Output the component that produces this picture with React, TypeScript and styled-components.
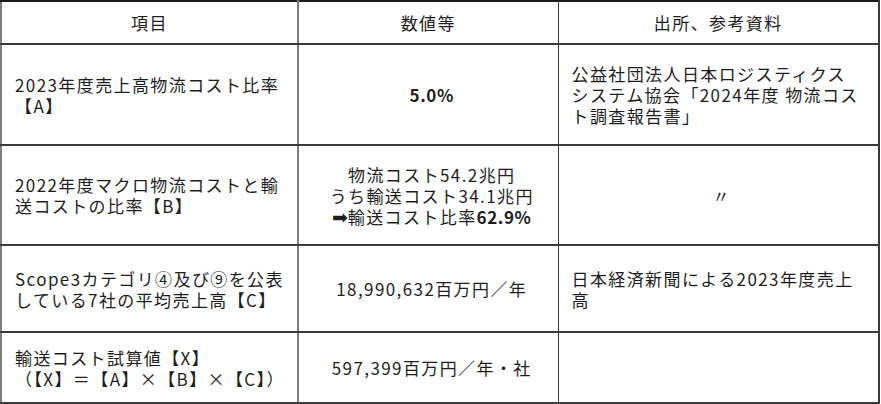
import React from "react";
import styled, { createGlobalStyle } from "styled-components";

const GlobalStyle = createGlobalStyle`
  *{
    box-sizing:border-box;
  }
  html, body{
    margin:0;
    padding:0;
    background:#ffffff;
  }
  body{
    font-family:"Noto Sans CJK JP", "Noto Sans", sans-serif;
    color:#1e1e1e;
  }
`;

const Table = styled.table`
  width: 878px;
  border-collapse: collapse;
  table-layout: fixed;
  font-size: 17px;
  letter-spacing: 1.4px;
  line-height: 21px;
  border-top: 2px solid #1a1a1a;
  border-left: 2px solid #7d7d7d;
  border-right: 2px solid #3a3a3a;
  border-bottom: 2px solid #7d7d7d;
`;

const Row = styled.tr<{ h: number }>`
  height: ${(p) => p.h}px;
`;

const HeadCell = styled.th<{ first?: boolean }>`
  font-weight: normal;
  text-align: center;
  vertical-align: middle;
  padding: 0 8px;
  border-bottom: 2px solid #3a3a3a;
  border-right: ${(p) => (p.first ? "2px solid #7d7d7d" : "1.5px solid #3a3a3a")};
`;

const Cell = styled.td<{ first?: boolean; center?: boolean }>`
  text-align: ${(p) => (p.center ? "center" : "left")};
  vertical-align: middle;
  padding: 0 6px 0 13px;
  white-space: nowrap;
  border-bottom: 2px solid #3a3a3a;
  border-right: ${(p) => (p.first ? "2px solid #7d7d7d" : "1.5px solid #3a3a3a")};
`;

const Line = styled.div`
  display: block;
  height: 21px;
  line-height: 21px;
`;

const Strong = styled.b`
  font-weight: bold;
  letter-spacing: 0.6px;
`;

const Arrow = styled.span`
  font-family: "DejaVu Sans", sans-serif;
  font-size: 19px;
  letter-spacing: 0;
  line-height: 21px;
`;

export default function App() {
  return (
    <>
      <GlobalStyle />
      <Table>
        <colgroup>
          <col style={{ width: 297 }} />
          <col style={{ width: 260 }} />
          <col style={{ width: 321 }} />
        </colgroup>
        <thead>
          <Row h={43}>
            <HeadCell first>項目</HeadCell>
            <HeadCell>数値等</HeadCell>
            <HeadCell>出所、参考資料</HeadCell>
          </Row>
        </thead>
        <tbody>
          <Row h={101}>
            <Cell first>
              <Line>2023年度売上高物流コスト比率</Line>
              <Line>【A】</Line>
            </Cell>
            <Cell center>
              <Strong>5.0%</Strong>
            </Cell>
            <Cell>
              <Line>公益社団法人日本ロジスティクス</Line>
              <Line>システム協会「2024年度 物流コス</Line>
              <Line>ト調査報告書」</Line>
            </Cell>
          </Row>
          <Row h={100}>
            <Cell first>
              <Line>2022年度マクロ物流コストと輸</Line>
              <Line>送コストの比率【B】</Line>
            </Cell>
            <Cell center>
              <Line>物流コスト54.2兆円</Line>
              <Line>うち輸送コスト34.1兆円</Line>
              <Line>
                <Arrow>➡</Arrow>輸送コスト比率<Strong>62.9%</Strong>
              </Line>
            </Cell>
            <Cell center>〃</Cell>
          </Row>
          <Row h={87}>
            <Cell first>
              <Line>Scope3カテゴリ④及び⑨を公表</Line>
              <Line>している7社の平均売上高【C】</Line>
            </Cell>
            <Cell center>18,990,632百万円／年</Cell>
            <Cell>
              <Line>日本経済新聞による2023年度売上</Line>
              <Line>高</Line>
            </Cell>
          </Row>
          <Row h={71}>
            <Cell first>
              <Line>輸送コスト試算値【X】</Line>
              <Line>（【X】＝【A】×【B】×【C】）</Line>
            </Cell>
            <Cell center>597,399百万円／年・社</Cell>
            <Cell />
          </Row>
        </tbody>
      </Table>
    </>
  );
}
